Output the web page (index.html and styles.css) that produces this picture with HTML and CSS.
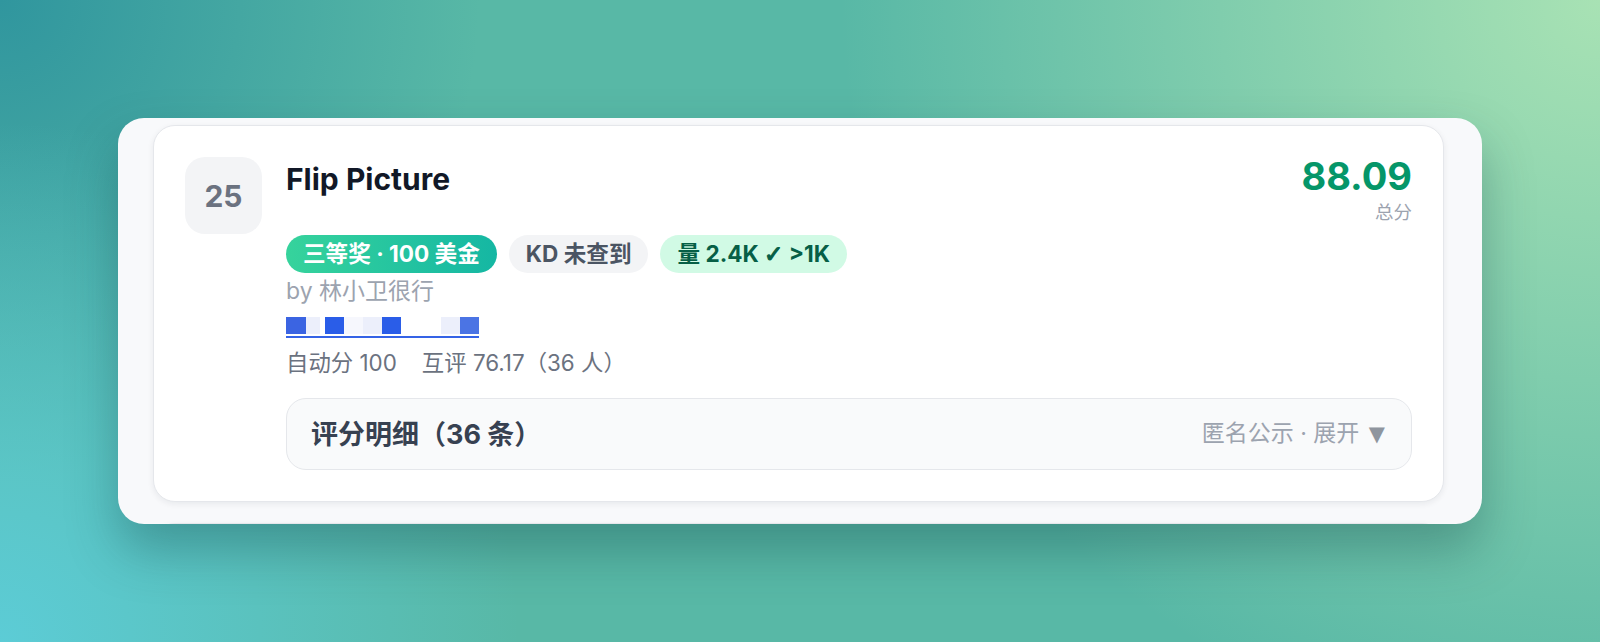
FILE: index.html
```html
<!DOCTYPE html>
<html lang="zh-CN">

<head>
    <meta charset="UTF-8">
    <meta name="viewport" content="width=device-width, initial-scale=1.0">
    <title>评分结果</title>
    <link rel="stylesheet" href="styles.css">
</head>

<body>
    <div class="panel">
        <div class="list">
            <article class="card">
                <div class="rank">25</div>
                <div class="main">
                    <div class="head">
                        <h2 class="title">Flip Picture</h2>
                        <div class="score">
                            <div class="score-num">88.09</div>
                            <div class="score-label">总分</div>
                        </div>
                    </div>

                    <div class="tags">
                        <span class="tag tag-prize">三等奖 · 100 美金</span>
                        <span class="tag tag-gray">KD 未查到</span>
                        <span class="tag tag-green">量 2.4K <span class="check">✓</span> &gt;1K</span>
                    </div>

                    <p class="author">by 林小卫很行</p>

                    <div class="link-row">
                        <a class="mosaic" href="#">
                            <span class="m m-blue m-first"></span>
                            <span class="m m-lav m-narrow"></span>
                            <span class="m m-white m-tiny"></span>
                            <span class="m m-blue2"></span>
                            <span class="m m-pale"></span>
                            <span class="m m-lav"></span>
                            <span class="m m-blue2"></span>
                            <span class="m m-white m-wide"></span>
                            <span class="m m-lav"></span>
                            <span class="m m-blue3"></span>
                        </a>
                    </div>

                    <p class="stats"><span>自动分 100</span><span class="peer">互评 76.17（36 人）</span></p>

                    <div class="details">
                        <span class="details-title">评分明细（36 条）</span>
                        <span class="details-hint">匿名公示 · 展开 <span class="arrow">▼</span></span>
                    </div>
                </div>
            </article>

            <article class="card card-next"></article>
        </div>
    </div>
</body>

</html>
```

FILE: styles.css
```css
html,
body {
    height: 100%;
}

body {
    margin: 0;
    font-family: Inter, "Noto Sans CJK SC", sans-serif;
    display: flex;
    align-items: center;
    justify-content: center;
    background:
        radial-gradient(circle at 100% 0%, rgba(168, 226, 180, 1) 0, rgba(168, 226, 180, 0) 760px),
        radial-gradient(circle at 0% 100%, rgba(92, 204, 214, 1) 0, rgba(92, 204, 214, 0) 520px),
        radial-gradient(circle at 0% 0%, rgba(48, 150, 158, 1) 0, rgba(48, 150, 158, 0) 480px),
        #58b8a6;
}

.panel {
    width: 1364px;
    height: 406px;
    box-sizing: border-box;
    padding: 7px 38px 0 35px;
    background-color: #f8f9fb;
    border-radius: 26px;
    overflow: hidden;
    box-shadow: 0 26px 50px rgba(16, 70, 72, 0.35);
}

.list {
    display: flex;
    flex-direction: column;
    gap: 21px;
}

.card {
    display: flex;
    gap: 24px;
    padding: 31px;
    background-color: white;
    border: 1px solid #e5e7eb;
    border-radius: 22px;
    box-shadow: 0 2px 6px rgba(15, 23, 42, 0.07);
}

.card-next {
    height: 120px;
    flex-shrink: 0;
}

.rank {
    flex: none;
    width: 77px;
    height: 77px;
    border-radius: 20px;
    background-color: #f3f4f6;
    color: #6b7280;
    font-size: 30px;
    font-weight: 700;
    display: flex;
    align-items: center;
    justify-content: center;
}

.main {
    flex: 1;
    min-width: 0;
}

.head {
    display: flex;
    justify-content: space-between;
    align-items: flex-start;
    margin-bottom: 10px;
}

.title {
    margin: 4px 0 0;
    font-size: 30px;
    line-height: 36px;
    font-weight: 700;
    color: #111827;
}

.score {
    text-align: right;
}

.score-num {
    font-size: 38px;
    line-height: 38px;
    font-weight: 700;
    color: #059669;
}

.score-label {
    margin-top: 5px;
    font-size: 18.5px;
    line-height: 25px;
    color: #9ca3af;
}

.tags {
    display: flex;
    gap: 12px;
}

.tag {
    display: inline-flex;
    align-items: center;
    height: 38px;
    padding: 0 17px;
    border-radius: 999px;
    font-size: 22.6px;
    font-weight: 700;
    line-height: 1;
    white-space: pre;
}

.tag-prize {
    background: linear-gradient(90deg, #36d39c, #15b7a3);
    color: white;
}

.tag-gray {
    background-color: #f3f4f6;
    color: #4b5563;
}

.tag-green {
    background-color: #d1fae5;
    color: #065f46;
}

.check {
    font-family: "DejaVu Sans", sans-serif;
    font-size: 23px;
    -webkit-text-stroke: 1.2px #065f46;
}

.author {
    margin: 0;
    font-size: 23px;
    line-height: 36px;
    color: #9ca3af;
}

.link-row {
    height: 36px;
    display: flex;
    align-items: center;
}

/* blurred link, drawn as the mosaic it shows */
.mosaic {
    display: flex;
    padding-bottom: 2px;
    border-bottom: 2px solid #3563e6;
}

.m {
    width: 19px;
    height: 17px;
}

.m-first {
    width: 20px;
}

.m-narrow {
    width: 14px;
}

.m-tiny {
    width: 5px;
}

.m-wide {
    width: 40px;
}

.m-blue {
    background-color: #3b64e2;
}

.m-blue2 {
    background-color: #2a5de8;
}

.m-blue3 {
    background-color: #4b74e4;
}

.m-lav {
    background-color: #eceffb;
}

.m-pale {
    background-color: #f6f7fd;
}

.m-white {
    background-color: white;
}

.stats {
    margin: 0;
    font-size: 22.4px;
    line-height: 36px;
    color: #6b7280;
}

.peer {
    margin-left: 25px;
}

.details {
    margin-top: 17px;
    display: flex;
    justify-content: space-between;
    align-items: center;
    padding: 21px 26px 21px 24px;
    background-color: #f9fafb;
    border: 1px solid #e5e7eb;
    border-radius: 20px;
}

.details-title {
    font-size: 27px;
    line-height: 27px;
    font-weight: 700;
    color: #374151;
}

.details-hint {
    font-size: 23px;
    line-height: 27px;
    color: #9ca3af;
}

.arrow {
    font-family: "DejaVu Sans", sans-serif;
    font-size: 21px;
    color: #8f959e;
    margin-left: 3px;
}
```
